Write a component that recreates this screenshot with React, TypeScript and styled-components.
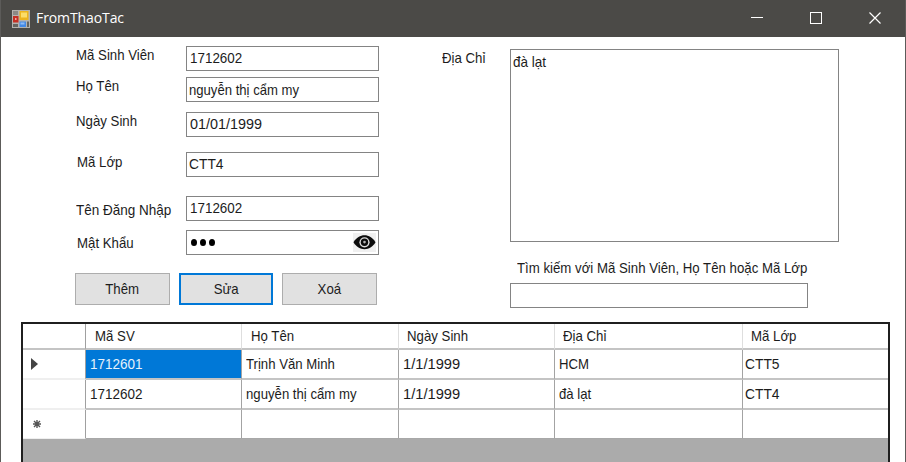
import React from "react";
import styled, { createGlobalStyle } from "styled-components";

const GlobalStyle = createGlobalStyle`
  * { box-sizing: border-box; }
  body { margin: 0; overflow: hidden; background: #fff; font-family: "Liberation Sans", Arial, sans-serif; }
`;

const Window = styled.div`
  width: 906px;
  height: 462px;
  display: flex;
  flex-direction: column;
  border-left: 1px solid #5c5b59;
  border-right: 1px solid #5c5b59;
  background: #fff;
  color: #1c1c1c;
  font-size: 15px;
  overflow: hidden;
`;

const TitleBar = styled.header`
  flex: 0 0 37px;
  display: flex;
  align-items: center;
  margin: 0 -1px;
  padding: 0 12px;
  background: #4b4a47;
  color: #fff;
  font: 14px "Open Sans", "Noto Sans", sans-serif;
`;

const Caption = styled.span`
  flex: 1;
  margin: -2px 0 0 6px;
  letter-spacing: -0.1px;
`;

const CaptionButtons = styled.div`
  display: flex;
  gap: 47px;
  margin: -1px 13px 0 0;
  svg { display: block; }
`;

/* Bitmap-style UI lettering is narrower than the outline face, so it is condensed. */
const Text = styled.span<{ $scale?: number; $origin?: string }>`
  display: inline-block;
  white-space: pre;
  line-height: 20px;
  transform: scaleX(${(p) => p.$scale ?? 0.882});
  transform-origin: ${(p) => p.$origin ?? "left"} center;
`;

const Form = styled.main`
  flex: 0 0 285px;
  display: grid;
  grid-template-columns: 305px 1fr;
  column-gap: 62px;
  padding: 9px 66px 0 74px;
`;

const FieldRow = styled.label<{ $gap: number; $labelTop: number; $indent?: number }>`
  display: grid;
  grid-template-columns: 111px 193px;
  height: 25px;
  margin-top: ${(p) => p.$gap}px;
  > span { margin: ${(p) => p.$labelTop}px 0 0 ${(p) => p.$indent ?? 1}px; justify-self: start; height: 20px; }
`;

const TextBox = styled.div<{ $pad?: number; $lift?: number }>`
  height: 25px;
  display: flex;
  align-items: center;
  padding: 0 2px ${(p) => p.$lift ?? 0}px ${(p) => p.$pad ?? 3}px;
  border: 1px solid #848484;
  background: #fff;
`;

const Dots = styled.div`
  flex: 1;
  display: flex;
  gap: 3px;
`;

const Dot = styled.i`
  width: 6px;
  height: 7px;
  border-radius: 50%;
  background: #000;
`;

const Buttons = styled.div`
  display: flex;
  gap: 9px;
  margin-top: 18px;
`;

const Button = styled.button<{ $focused?: boolean }>`
  width: ${(p) => (p.$focused ? 94 : 95)}px;
  height: 32px;
  padding: 0;
  border: ${(p) => (p.$focused ? "2px solid #0078d7" : "1px solid #adadad")};
  background: #e1e1e1;
  color: #1c1c1c;
  font: 15px "Liberation Sans", Arial, sans-serif;
`;

const AddressRow = styled.div`
  display: grid;
  grid-template-columns: 68px 329px;
  padding-top: 3px;
  > span { justify-self: start; height: 20px; margin-top: -1px; }
`;

const AddressBox = styled.div`
  height: 193px;
  padding: 2px;
  border: 1px solid #848484;
`;

const Search = styled.div`
  width: 298px;
  margin: 16px 0 0 68px;
  > span { margin-left: 7px; }
  > div { margin-top: 5px; }
`;

const Grid = styled.section`
  flex: 1;
  margin: 0 15px 0 20px;
  border: 1px solid #1f1f1f;
  border-width: 2px 2px 0 2px;
  background: #ababab;
`;

const Row = styled.div<{ $height: number }>`
  display: grid;
  grid-template-columns: 63px 156px 157px 156px 188px 1fr;
  height: ${(p) => p.$height}px;
`;

const Cell = styled.div<{ $head?: boolean; $selected?: boolean; $last?: boolean; $pad?: number }>`
  display: flex;
  align-items: center;
  padding-left: ${(p) => p.$pad ?? 4}px;
  border-right: 1px solid ${(p) => (p.$head ? "#dedede" : "#a3a3a3")};
  border-bottom: ${(p) => (p.$last ? "1px solid #a8a8a8" : "2px solid #c4c4c4")};
  background: ${(p) => (p.$selected ? "#0078d7" : "#fff")};
  background-clip: padding-box;
  color: ${(p) => (p.$selected ? "#e6f2fc" : "inherit")};
  &:last-child { border-right: 0; }
`;

const RowHeader = styled(Cell)`
  border-right-color: #a0a0a0;
  border-bottom-color: ${(p) => (p.$head ? "#c4c4c4" : "#efefef")};
`;

const AppIcon = () => (
  <svg width="18" height="18" viewBox="0 0 18 18">
    <rect width="18" height="18" fill="#b4b2ae" />
    <rect x="1" y="1" width="5" height="4" fill="#8b8985" />
    <rect x="7.5" y="1" width="9" height="9" fill="#edb41d" />
    <rect x="9" y="2.5" width="6" height="5" fill="#fbdc69" />
    <rect x="1" y="6" width="5.5" height="6.5" fill="#c52f23" />
    <rect x="3" y="8" width="1.5" height="2" fill="#f0a59e" />
    <rect x="1" y="14" width="5" height="3" fill="#65635f" />
    <rect x="7.5" y="11.5" width="6.5" height="5.5" fill="#4388e4" />
    <rect x="8.5" y="12.5" width="4" height="2" fill="#8dbbf5" />
    <rect x="15" y="11.5" width="2" height="5.5" fill="#65635f" />
  </svg>
);

const Eye = () => (
  <svg width="23" height="19" viewBox="0 0 23 19">
    <rect width="23" height="19" fill="#f0f0f0" />
    <path d="M.5 9.3C6 0 17 0 22.5 9.3C17 18.6 6 18.6 .5 9.3Z" fill="#0c0c0c" />
    <circle cx="11.5" cy="9.3" r="5.1" fill="#dedede" />
    <circle cx="11.5" cy="9.3" r="3.7" fill="#0c0c0c" />
    <circle cx="11.5" cy="9.1" r="1.3" fill="#b5b5b5" />
  </svg>
);

const fields = [
  { label: "Mã Sinh Viên", value: "1712602", scale: 0.895, gap: 0, top: -1, pad: 3, lift: 2 },
  { label: "Họ Tên", value: "nguyễn thị cẩm my", scale: 0.874, gap: 6, top: -1, pad: 2, lift: 0 },
  { label: "Ngày Sinh", value: "01/01/1999", scale: 0.96, gap: 10, top: -1, pad: 3, lift: 2 },
  { label: "Mã Lớp", value: "CTT4", scale: 0.92, gap: 15, top: 0, pad: 2, indent: 2, lift: 2 },
  { label: "Tên Đăng Nhập", value: "1712602", scale: 0.895, gap: 19, top: 4, pad: 3, lift: 2 },
];

const columns = [
  { title: "Mã SV", pad: 9, cellPad: 4 },
  { title: "Họ Tên", pad: 9, cellPad: 4 },
  { title: "Ngày Sinh", pad: 8, cellPad: 4 },
  { title: "Địa Chỉ", pad: 8, cellPad: 4 },
  { title: "Mã Lớp", pad: 8, cellPad: 2 },
];

const rows = [
  ["1712601", "Trịnh Văn Minh", "1/1/1999", "HCM", "CTT5"],
  ["1712602", "nguyễn thị cẩm my", "1/1/1999", "đà lạt", "CTT4"],
];

/* Slashes and capital codes are set wider than running text. */
const cellScale = (v: string) => (v.includes("/") ? 0.98 : v.startsWith("CTT") ? 0.92 : /^\d/.test(v) ? 0.9 : 0.878);

export default function App() {
  return (
    <Window>
      <GlobalStyle />
      <TitleBar>
        <AppIcon />
        <Caption>FromThaoTac</Caption>
        <CaptionButtons>
          <svg width="12" height="12"><path d="M0 5.5H12" stroke="#fff" /></svg>
          <svg width="12" height="12"><rect x=".5" y=".5" width="11" height="11" fill="none" stroke="#fff" /></svg>
          <svg width="12" height="12"><path d="M.5.5l11 11M11.5.5l-11 11" stroke="#fff" strokeWidth="1.2" /></svg>
        </CaptionButtons>
      </TitleBar>
      <Form>
        <div>
          {fields.map((f) => (
            <FieldRow key={f.label} $gap={f.gap} $labelTop={f.top} $indent={f.indent}>
              <Text $scale={f.label === "Tên Đăng Nhập" ? 0.9 : undefined}>{f.label}</Text>
              <TextBox $pad={f.pad} $lift={f.lift}><Text $scale={f.scale}>{f.value}</Text></TextBox>
            </FieldRow>
          ))}
          <FieldRow $gap={9} $labelTop={3} $indent={2}>
            <Text>Mật Khẩu</Text>
            <TextBox $pad={4} $lift={1}>
              <Dots><Dot /><Dot /><Dot /></Dots>
              <Eye />
            </TextBox>
          </FieldRow>
          <Buttons>
            <Button><Text $origin="center">Thêm</Text></Button>
            <Button $focused><Text $origin="center">Sửa</Text></Button>
            <Button><Text $origin="center">Xoá</Text></Button>
          </Buttons>
        </div>
        <div>
          <AddressRow>
            <Text>Địa Chỉ</Text>
            <AddressBox><Text $scale={0.9}>đà lạt</Text></AddressBox>
          </AddressRow>
          <Search>
            <Text>Tìm kiếm với Mã Sinh Viên, Họ Tên hoặc Mã Lớp</Text>
            <TextBox />
          </Search>
        </div>
      </Form>
      <Grid>
        <Row $height={26}>
          <RowHeader $head />
          {columns.map((c) => (
            <Cell key={c.title} $head $pad={c.pad}><Text>{c.title}</Text></Cell>
          ))}
        </Row>
        {rows.map((r, i) => (
          <Row key={r[0]} $height={30}>
            <RowHeader $pad={8}>
              {i === 0 && <svg width="7" height="12"><path d="M0 0L7 6L0 12Z" fill="#444" /></svg>}
            </RowHeader>
            {r.map((v, j) => (
              <Cell key={j} $selected={i === 0 && j === 0} $pad={columns[j].cellPad}>
                <Text $scale={cellScale(v)}>{v}</Text>
              </Cell>
            ))}
          </Row>
        ))}
        <Row $height={29}>
          <RowHeader $pad={10} $last>
            <svg width="8" height="8"><path d="M4 0V8M0 4H8M1 1L7 7M7 1L1 7" stroke="#555" strokeWidth="1.4" /></svg>
          </RowHeader>
          {columns.map((c) => <Cell key={c.title} $last />)}
        </Row>
      </Grid>
    </Window>
  );
}
